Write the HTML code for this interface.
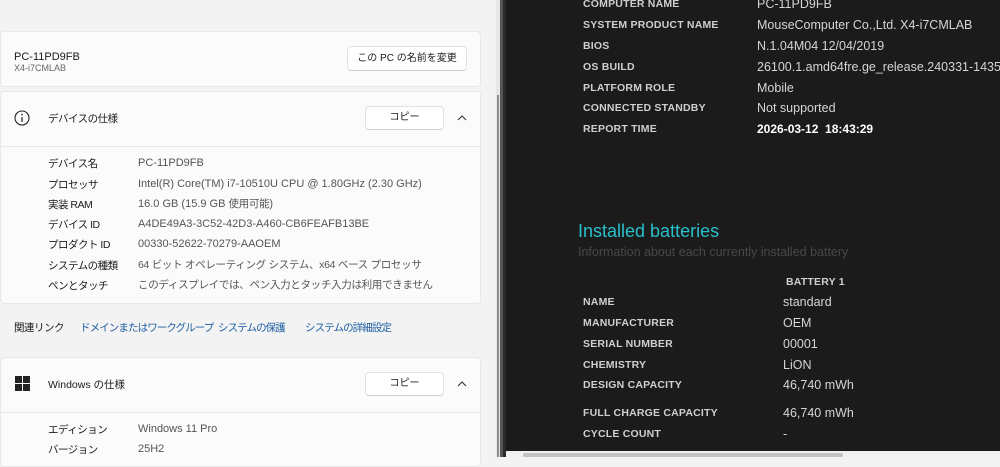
<!DOCTYPE html>
<html><head><meta charset="utf-8"><style>
*{margin:0;padding:0;box-sizing:border-box}
body{width:1000px;height:457px;overflow:hidden;position:relative;background:#f3f3f3;font-family:"Liberation Sans","Noto Sans CJK JP",sans-serif}
.a{position:absolute;white-space:nowrap;line-height:14px}
.card{position:absolute;left:0;width:481px;background:#fbfbfb;border:1px solid #e8e8e8;border-radius:4px}
.btn{position:absolute;background:#fff;border:1px solid #e2e2e2;border-bottom-color:#d0d0d0;border-radius:4px;font-size:10px;color:#1a1a1a;text-align:center}
.l{font-size:10.5px;color:#1a1a1a;left:48px;letter-spacing:-.5px}
.v{font-size:11px;color:#555;left:138px}
.v span{font-size:10.5px;letter-spacing:-.3px}
.lk{font-size:10.5px;color:#1f5fa3;letter-spacing:-.9px}
#dark{position:absolute;left:503px;top:0;width:497px;height:457px;background:#1b1b1b;border-left:3px solid #2a2a2a}
.dl{position:absolute;left:77px;font-size:10.5px;font-weight:bold;letter-spacing:.2px;color:#cfcfcf;white-space:nowrap;line-height:14px}
.dv{position:absolute;left:251px;font-size:12.5px;color:#d5d5d5;white-space:nowrap;line-height:14px}
</style></head><body>
<div class="card" style="top:31px;height:56px"></div>
<div class="a" style="left:14px;top:50px;font-size:11px;color:#1a1a1a">PC-11PD9FB</div>
<div class="a" style="left:14px;top:61px;font-size:9px;color:#666">X4-i7CMLAB</div>
<div class="btn" style="left:347px;top:46px;width:120px;height:25px;line-height:23px">この PC の名前を変更</div>

<div class="card" style="top:91px;height:213px"></div>
<div class="a" style="left:0;top:146px;width:481px;height:1px;background:#e8e8e8"></div>
<svg class="a" style="left:14px;top:110px" width="16" height="16"><circle cx="8" cy="8" r="7" fill="none" stroke="#222" stroke-width="1.1"/><line x1="8" y1="7" x2="8" y2="12" stroke="#222" stroke-width="1.2"/><circle cx="8" cy="4.6" r=".8" fill="#222"/></svg>
<div class="a l" style="top:112px">デバイスの仕様</div>
<div class="btn" style="left:365px;top:106px;width:79px;height:24px;line-height:22px">コピー</div>
<svg class="a" style="left:456px;top:114px" width="12" height="8"><path d="M2 6 L6 2 L10 6" fill="none" stroke="#333" stroke-width="1.1"/></svg>
<div class="a l" style="top:157px">デバイス名</div><div class="a v" style="top:156px">PC-11PD9FB</div>
<div class="a l" style="top:178px">プロセッサ</div><div class="a v" style="top:177px">Intel(R) Core(TM) i7-10510U CPU @ 1.80GHz (2.30 GHz)</div>
<div class="a l" style="top:198px">実装 RAM</div><div class="a v" style="top:197px">16.0 GB (15.9 GB <span>使用可能</span>)</div>
<div class="a l" style="top:218px">デバイス ID</div><div class="a v" style="top:217px">A4DE49A3-3C52-42D3-A460-CB6FEAFB13BE</div>
<div class="a l" style="top:238px">プロダクト ID</div><div class="a v" style="top:237px">00330-52622-70279-AAOEM</div>
<div class="a l" style="top:259px">システムの種類</div><div class="a v" style="top:258px"><span>64 ビット オペレーティング システム、x64 ベース プロセッサ</span></div>
<div class="a l" style="top:279px">ペンとタッチ</div><div class="a v" style="top:278px"><span>このディスプレイでは、ペン入力とタッチ入力は利用できません</span></div>

<div class="a" style="left:14px;top:321px;font-size:10.5px;color:#1a1a1a;letter-spacing:-.5px">関連リンク</div>
<div class="a lk" style="left:80px;top:321px">ドメインまたはワークグループ</div>
<div class="a lk" style="left:218px;top:321px">システムの保護</div>
<div class="a lk" style="left:305px;top:321px">システムの詳細設定</div>

<div class="card" style="top:357px;height:110px"></div>
<div class="a" style="left:0;top:412px;width:481px;height:1px;background:#e8e8e8"></div>
<svg class="a" style="left:15px;top:376px" width="15" height="15"><rect x="0" y="0" width="7" height="7" fill="#222"/><rect x="8" y="0" width="7" height="7" fill="#222"/><rect x="0" y="8" width="7" height="7" fill="#222"/><rect x="8" y="8" width="7" height="7" fill="#222"/></svg>
<div class="a l" style="top:378px;letter-spacing:0">Windows の仕様</div>
<div class="btn" style="left:365px;top:372px;width:79px;height:24px;line-height:22px">コピー</div>
<svg class="a" style="left:456px;top:380px" width="12" height="8"><path d="M2 6 L6 2 L10 6" fill="none" stroke="#333" stroke-width="1.1"/></svg>
<div class="a l" style="top:423px">エディション</div><div class="a v" style="top:422px">Windows 11 Pro</div>
<div class="a l" style="top:443px">バージョン</div><div class="a v" style="top:442px">25H2</div>

<div class="a" style="left:496px;top:0;width:4px;height:457px;background:#e6e6e6"></div>
<div class="a" style="left:497px;top:95px;width:2px;height:362px;background:#8a8a8a"></div>
<div class="a" style="left:500px;top:0;width:3px;height:457px;background:#555"></div>

<div id="dark">
<div class="dl" style="top:-3px">COMPUTER NAME</div><div class="dv" style="top:-3px">PC-11PD9FB</div>
<div class="dl" style="top:18px">SYSTEM PRODUCT NAME</div><div class="dv" style="top:18px">MouseComputer Co.,Ltd. X4-i7CMLAB</div>
<div class="dl" style="top:39px">BIOS</div><div class="dv" style="top:39px">N.1.04M04 12/04/2019</div>
<div class="dl" style="top:60px">OS BUILD</div><div class="dv" style="top:60px">26100.1.amd64fre.ge_release.240331-1435</div>
<div class="dl" style="top:81px">PLATFORM ROLE</div><div class="dv" style="top:81px">Mobile</div>
<div class="dl" style="top:101px">CONNECTED STANDBY</div><div class="dv" style="top:101px">Not supported</div>
<div class="dl" style="top:122px">REPORT TIME</div><div class="dv" style="top:122px;color:#fff;font-weight:bold;font-size:12px">2026-03-12&nbsp; 18:43:29</div>
<div class="a" style="left:72px;top:221px;font-size:18px;line-height:20px;color:#29c0cc">Installed batteries</div>
<div class="a" style="left:72px;top:245px;font-size:12.5px;color:#484848">Information about each currently installed battery</div>
<div class="dl" style="left:280px;top:275px">BATTERY 1</div>
<div class="dl" style="top:295px">NAME</div><div class="dv" style="left:277px;top:295px">standard</div>
<div class="dl" style="top:316px">MANUFACTURER</div><div class="dv" style="left:277px;top:316px">OEM</div>
<div class="dl" style="top:337px">SERIAL NUMBER</div><div class="dv" style="left:277px;top:337px">00001</div>
<div class="dl" style="top:358px">CHEMISTRY</div><div class="dv" style="left:277px;top:358px">LiON</div>
<div class="dl" style="top:378px">DESIGN CAPACITY</div><div class="dv" style="left:277px;top:378px">46,740 mWh</div>
<div class="dl" style="top:406px">FULL CHARGE CAPACITY</div><div class="dv" style="left:277px;top:406px">46,740 mWh</div>
<div class="dl" style="top:427px">CYCLE COUNT</div><div class="dv" style="left:277px;top:427px">-</div>
<div class="a" style="left:0;top:451px;width:497px;height:6px;background:#f0f0f0"></div>
<div class="a" style="left:17px;top:453px;width:320px;height:4px;background:#c2c2c2;border-radius:2px"></div>
</div>
</body></html>
